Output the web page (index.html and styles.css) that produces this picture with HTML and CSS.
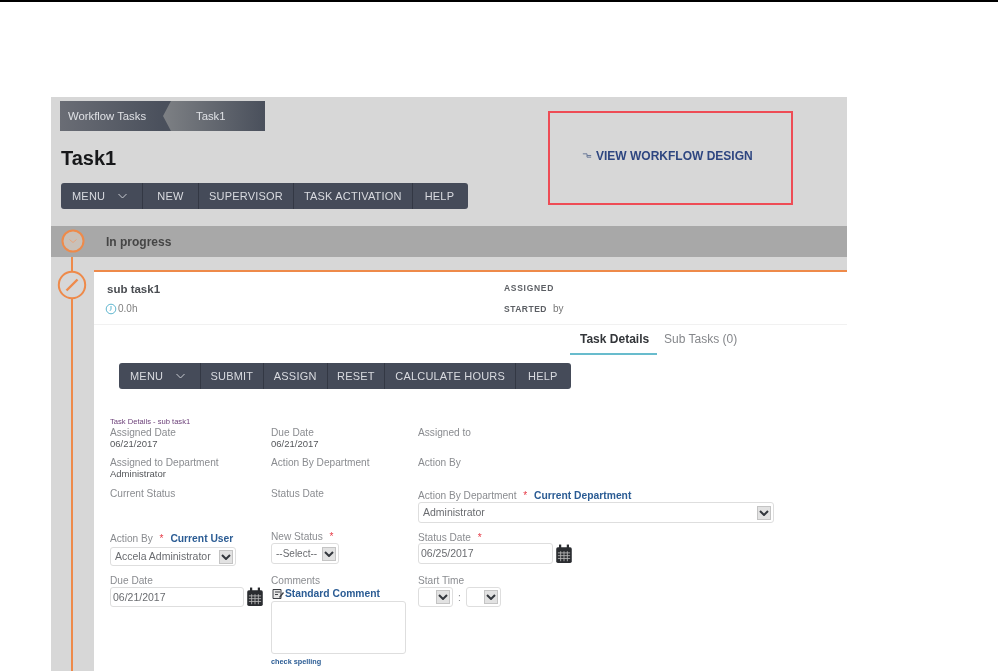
FILE: index.html
```html
<!DOCTYPE html>
<html lang="en">
<head>
<meta charset="utf-8">
<title>Task1</title>
<link rel="stylesheet" href="styles.css">
</head>
<body>
<div class="topbar"></div>
<main class="shot">
  <header class="head">
    <div class="head-left">
      <nav class="crumbs">
        <span class="crumb-a">Workflow Tasks</span>
        <span class="crumb-b">Task1</span>
      </nav>
      <h1 class="title">Task1</h1>
      <div class="menu">
        <span class="mi mi-menu">MENU<svg class="chev" viewBox="0 0 10 6"><path d="M1 1l4 4 4-4" fill="none" stroke="#c9ccd2" stroke-width="1"/></svg></span>
        <span class="mi mi-new">NEW</span>
        <span class="mi">SUPERVISOR</span>
        <span class="mi">TASK ACTIVATION</span>
        <span class="mi mi-last">HELP</span>
      </div>
    </div>
    <div class="callout">
      <svg class="wf" viewBox="0 0 12 10"><path d="M1 3h5v4h5M6 5h5" fill="none" stroke="#6b7a99" stroke-width="1.2"/></svg>
      <span>VIEW WORKFLOW DESIGN</span>
    </div>
  </header>

  <div class="band">
    <svg class="node-s" viewBox="0 0 24 24"><circle cx="12" cy="12" r="10.5" fill="#c9c0b8" stroke="#ee8a4a" stroke-width="2"/><path d="M8.5 10.5l3.5 3 3.5-3" fill="none" stroke="#e8a47c" stroke-width="1"/></svg>
    <span class="band-text">In progress</span>
  </div>

  <div class="flowrow">
    <aside class="rail">
      <svg class="node-l" viewBox="0 0 30 30"><circle cx="15" cy="15" r="13.2" fill="#d7d7d7" stroke="#ee8a4a" stroke-width="2"/><path d="M9.5 20.5L20.5 9.5" stroke="#ee8a4a" stroke-width="2.4"/></svg>
    </aside>
    <section class="card">
      <div class="sum">
        <div class="sum-left">
          <div class="sum-name">sub task1</div>
          <div class="sum-time"><svg class="clock" viewBox="0 0 12 12"><circle cx="6" cy="6" r="4.8" fill="none" stroke="#5fb6cf" stroke-width="1"/><path d="M6 3v3.2l-1 1.6" fill="none" stroke="#5fb6cf" stroke-width="1"/></svg>0.0h</div>
        </div>
        <div class="sum-right">
          <div class="sum-k">ASSIGNED</div>
          <div class="sum-k sum-k2">STARTED <span class="by">by</span></div>
        </div>
      </div>
      <div class="tabs">
        <span class="tab tab-on">Task Details</span>
        <span class="tab">Sub Tasks (0)</span>
      </div>
      <div class="menu menu2">
        <span class="mi mi-menu2">MENU<svg class="chev" viewBox="0 0 10 6"><path d="M1 1l4 4 4-4" fill="none" stroke="#c9ccd2" stroke-width="1"/></svg></span>
        <span class="mi mi-tight">SUBMIT</span>
        <span class="mi">ASSIGN</span>
        <span class="mi mi-tight">RESET</span>
        <span class="mi">CALCULATE HOURS</span>
        <span class="mi mi-last">HELP</span>
      </div>

      <div class="form">
        <div class="form-cap">Task Details - sub task1</div>
        <div class="grow g1">
          <div><div class="lb">Assigned Date</div><div class="val">06/21/2017</div></div>
          <div><div class="lb">Due Date</div><div class="val">06/21/2017</div></div>
          <div><div class="lb">Assigned to</div></div>
        </div>
        <div class="grow g2">
          <div><div class="lb">Assigned to Department</div><div class="val">Administrator</div></div>
          <div><div class="lb">Action By Department</div></div>
          <div><div class="lb">Action By</div></div>
        </div>
        <div class="grow g3">
          <div><div class="lb">Current Status</div></div>
          <div><div class="lb">Status Date</div></div>
          <div class="down2">
            <div class="lb">Action By Department <span class="req">*</span> <a class="lnk lnk-gap">Current Department</a></div>
            <div class="sel sel-dept"><span class="sel-t">Administrator</span><span class="arr"><svg viewBox="0 0 10 6"><path d="M1 1l4 4 4-4" fill="none" stroke="#33373d" stroke-width="2"/></svg></span></div>
          </div>
        </div>
        <div class="grow g4">
          <div class="down2">
            <div class="lb">Action By <span class="req">*</span> <a class="lnk lnk-gap">Current User</a></div>
            <div class="sel sel-user"><span class="sel-t">Accela Administrator</span><span class="arr"><svg viewBox="0 0 10 6"><path d="M1 1l4 4 4-4" fill="none" stroke="#33373d" stroke-width="2"/></svg></span></div>
          </div>
          <div>
            <div class="lb">New Status <span class="req">*</span></div>
            <div class="sel sel-status"><span class="sel-t">--Select--</span><span class="arr"><svg viewBox="0 0 10 6"><path d="M1 1l4 4 4-4" fill="none" stroke="#33373d" stroke-width="2"/></svg></span></div>
          </div>
          <div class="down1">
            <div class="lb">Status Date <span class="req">*</span></div>
            <div class="datewrap">
              <div class="inp">06/25/2017</div>
              <svg class="cal" viewBox="0 0 16 18"><rect x="1" y="3" width="14" height="14" rx="1.5" fill="#2a2c30"/><rect x="3.5" y="0.5" width="2" height="4" fill="#2a2c30"/><rect x="10.5" y="0.5" width="2" height="4" fill="#2a2c30"/><path d="M2.5 8h11M2.5 10.5h11M2.5 13h11M5 6.5v9M8 6.5v9M11 6.5v9" stroke="#b5b5b5" stroke-width=".8"/></svg>
            </div>
          </div>
        </div>
        <div class="grow g5">
          <div>
            <div class="lb">Due Date</div>
            <div class="datewrap datewrap-due">
              <div class="inp inp-due">06/21/2017</div>
              <svg class="cal" viewBox="0 0 16 18"><rect x="1" y="3" width="14" height="14" rx="1.5" fill="#2a2c30"/><rect x="3.5" y="0.5" width="2" height="4" fill="#2a2c30"/><rect x="10.5" y="0.5" width="2" height="4" fill="#2a2c30"/><path d="M2.5 8h11M2.5 10.5h11M2.5 13h11M5 6.5v9M8 6.5v9M11 6.5v9" stroke="#b5b5b5" stroke-width=".8"/></svg>
            </div>
          </div>
          <div>
            <div class="lb">Comments</div>
            <div class="std"><svg class="doc" viewBox="0 0 13 12"><path d="M1 1.5h8v9H1zM3 4h5M3 6.5h3" fill="#e6e6e6" stroke="#3c3f44" stroke-width="1"/><path d="M7 9l4-5 1 1-4 5z" fill="#3c3f44"/></svg><a class="lnk">Standard Comment</a></div>
            <div class="ta"></div>
            <a class="spell">check spelling</a>
          </div>
          <div>
            <div class="lb">Start Time</div>
            <div class="times">
              <div class="sel sel-time"><span class="arr"><svg viewBox="0 0 10 6"><path d="M1 1l4 4 4-4" fill="none" stroke="#33373d" stroke-width="2"/></svg></span></div>
              <span class="colon">:</span>
              <div class="sel sel-time"><span class="arr"><svg viewBox="0 0 10 6"><path d="M1 1l4 4 4-4" fill="none" stroke="#33373d" stroke-width="2"/></svg></span></div>
            </div>
          </div>
        </div>
      </div>
    </section>
  </div>
</main>
</body>
</html>
```
FILE: styles.css
```css
* { box-sizing: border-box; }
html, body { margin: 0; padding: 0; height: 671px; overflow: hidden; background: #fff; }
body { font-family: "Liberation Sans", Arial, sans-serif; }
.topbar { height: 2px; background: #000; }

.shot {
  width: 796px;
  height: 574px;
  margin: 95px 0 0 51px;
  background: #d7d7d7;
  overflow: hidden;
  filter: blur(0.7px);
}

/* header */
.head { display: flex; height: 129px; }
.head-left { width: 497px; padding: 4px 0 0 9px; }
.crumbs {
  display: flex;
  width: 205px;
  height: 30px;
  align-items: center;
  font-size: 11.3px;
  color: #dfe1e5;
  background: linear-gradient(90deg, #6a6d75, #4a505c 50%);
}
.crumb-a { width: 104px; height: 30px; line-height: 30px; padding-left: 8px; white-space: nowrap; }
.crumb-b {
  width: 101px;
  height: 30px;
  line-height: 30px;
  padding-left: 33px;
  background: linear-gradient(90deg, #7d8084, #4a505c);
  clip-path: polygon(8px 0, 100% 0, 100% 100%, 8px 100%, 0 50%);
  margin-left: -1px;
}
.title { margin: 15px 0 0 1px; height: 26px; font-size: 20px; line-height: 24px; font-weight: 700; color: #17181a; }
.menu {
  display: flex;
  width: 407px;
  height: 26px;
  margin: 11px 0 0 1px;
  background: #454b59;
  border-radius: 3px;
  font-size: 11px;
  letter-spacing: .2px;
  color: #d9dbe0;
  line-height: 26px;
}
.mi { padding: 0 10px; border-right: 1px solid #333844; white-space: nowrap; }
.mi-last { border-right: 0; padding-left: 12px; }
.mi-menu, .mi-menu2 { width: 82px; padding-left: 11px; }
.mi-new { width: 56px; text-align: center; padding: 0; }
.mi-tight { padding: 0 9.5px; }
.chev { width: 11px; height: 6px; margin-left: 12px; vertical-align: 1px; }

.callout {
  display: flex;
  align-items: center;
  gap: 4px;
  width: 245px;
  height: 94px;
  margin-top: 14px;
  padding: 0 0 5px 32px;
  border: 2px solid #ee4c55;
  color: #2e4680;
  font-size: 12px;
  font-weight: 700;
  white-space: nowrap;
}
.wf { width: 10px; height: 9px; }

/* status band */
.band {
  display: flex;
  align-items: center;
  height: 31px;
  background: #a8a8a8;
  padding-left: 10px;
}
.node-s { width: 24px; height: 24px; margin-top: -2px; }
.band-text { margin-left: 21px; font-size: 12px; font-weight: 700; color: #454545; }

/* timeline + card */
.flowrow { display: flex; height: 414px; }
.rail {
  width: 43px;
  flex: none;
  padding-top: 13px;
  background: linear-gradient(#ee8a4a, #ee8a4a) 20px 0 / 2px 100% no-repeat;
}
.node-l { display: block; width: 30px; height: 30px; margin: 0 0 0 6px; }
.card { flex: 1; margin-top: 13px; background: #fff; border-top: 2px solid #ee8a4a; }

.sum { display: flex; height: 53px; border-bottom: 1px solid #f1f1f1; padding-left: 13px; }
.sum-left { width: 397px; }
.sum-name { margin-top: 10px; font-size: 11.5px; line-height: 14px; font-weight: 700; color: #4a4d52; }
.sum-time { display: flex; align-items: center; gap: 1px; margin-top: 7px; margin-left: -2px; font-size: 10px; line-height: 12px; color: #808080; }
.clock { width: 12px; height: 12px; }
.sum-k { margin-top: 10px; font-size: 8.5px; line-height: 12px; font-weight: 700; letter-spacing: .7px; color: #5c5f64; }
.sum-k2 { margin-top: 9px; letter-spacing: .5px; }
.by { margin-left: 3px; font-weight: 400; color: #777; letter-spacing: 0; font-size: 10px; }

.tabs { display: flex; height: 30px; margin-left: 476px; font-size: 12px; line-height: 29px; }
.tab { padding: 0 10px; color: #85878b; white-space: nowrap; }
.tab-on { width: 87px; color: #33363a; font-weight: 700; border-bottom: 2px solid #68bccd; }
.tab + .tab { padding-left: 7px; }

.menu2 { width: 452px; margin: 8px 0 0 25px; }

.form { padding: 28px 0 0 16px; font-size: 10.15px; color: #8a8c90; line-height: 11px; }
.form-cap { font-size: 7.6px; line-height: 10px; color: #6b3f78; white-space: nowrap; }
.grow { display: grid; grid-template-columns: 161px 147px 356px; }
.g1 { height: 30px; }
.g2 { height: 31px; }
.g3 { height: 43px; }
.g4 { height: 44px; }
.lb { white-space: nowrap; }
.val { color: #55575b; font-size: 9.5px; }
.down2 { padding-top: 2px; }
.down1 { padding-top: 1px; }
.req { color: #e63b47; margin-left: 4px; }
.lnk { color: #2b5c94; font-weight: 700; font-size: 10.3px; }
.lnk-gap { margin-left: 4px; }

.sel {
  display: flex;
  align-items: center;
  justify-content: space-between;
  border: 1px solid #dedede;
  border-radius: 3px;
  background: #fff;
  padding: 0 2px 0 4px;
  color: #6a6c70;
  font-size: 10.5px;
  height: 21px;
}
.sel-t { white-space: nowrap; }
.arr {
  display: flex;
  align-items: center;
  justify-content: center;
  width: 14px;
  height: 14px;
  background: #e2e2e2;
  border: 1px solid #c4c4c4;
}
.arr svg { width: 10px; height: 6px; }
.sel-dept { width: 356px; margin-top: 1px; }
.sel-user { width: 126px; height: 19px; margin-top: 3px; }
.sel-status { width: 68px; margin-top: 1px; font-size: 10px; }
.sel-time { width: 35px; height: 20px; justify-content: flex-end; }

.datewrap { display: flex; align-items: center; gap: 2px; }
.datewrap-due { margin-top: 1px; }
.inp {
  width: 135px;
  height: 21px;
  border: 1px solid #dedede;
  border-radius: 3px;
  padding: 0 2px;
  line-height: 19px;
  color: #6a6c70;
  font-size: 10.5px;
}
.inp-due { width: 134px; height: 20px; }
.cal { width: 18px; height: 20px; flex: none; }

.std { display: flex; align-items: center; height: 11px; margin-top: 2px; }
.doc { width: 13px; height: 12px; flex: none; margin-left: 1px; }
.ta { width: 135px; height: 53px; margin-top: 2px; border: 1px solid #dedede; border-radius: 3px; }
.spell { display: block; margin-top: 3px; font-size: 7.3px; font-weight: 700; line-height: 10px; color: #2b5c94; }
.times { display: flex; align-items: center; margin-top: 1px; }
.colon { width: 13px; text-align: center; }
```
